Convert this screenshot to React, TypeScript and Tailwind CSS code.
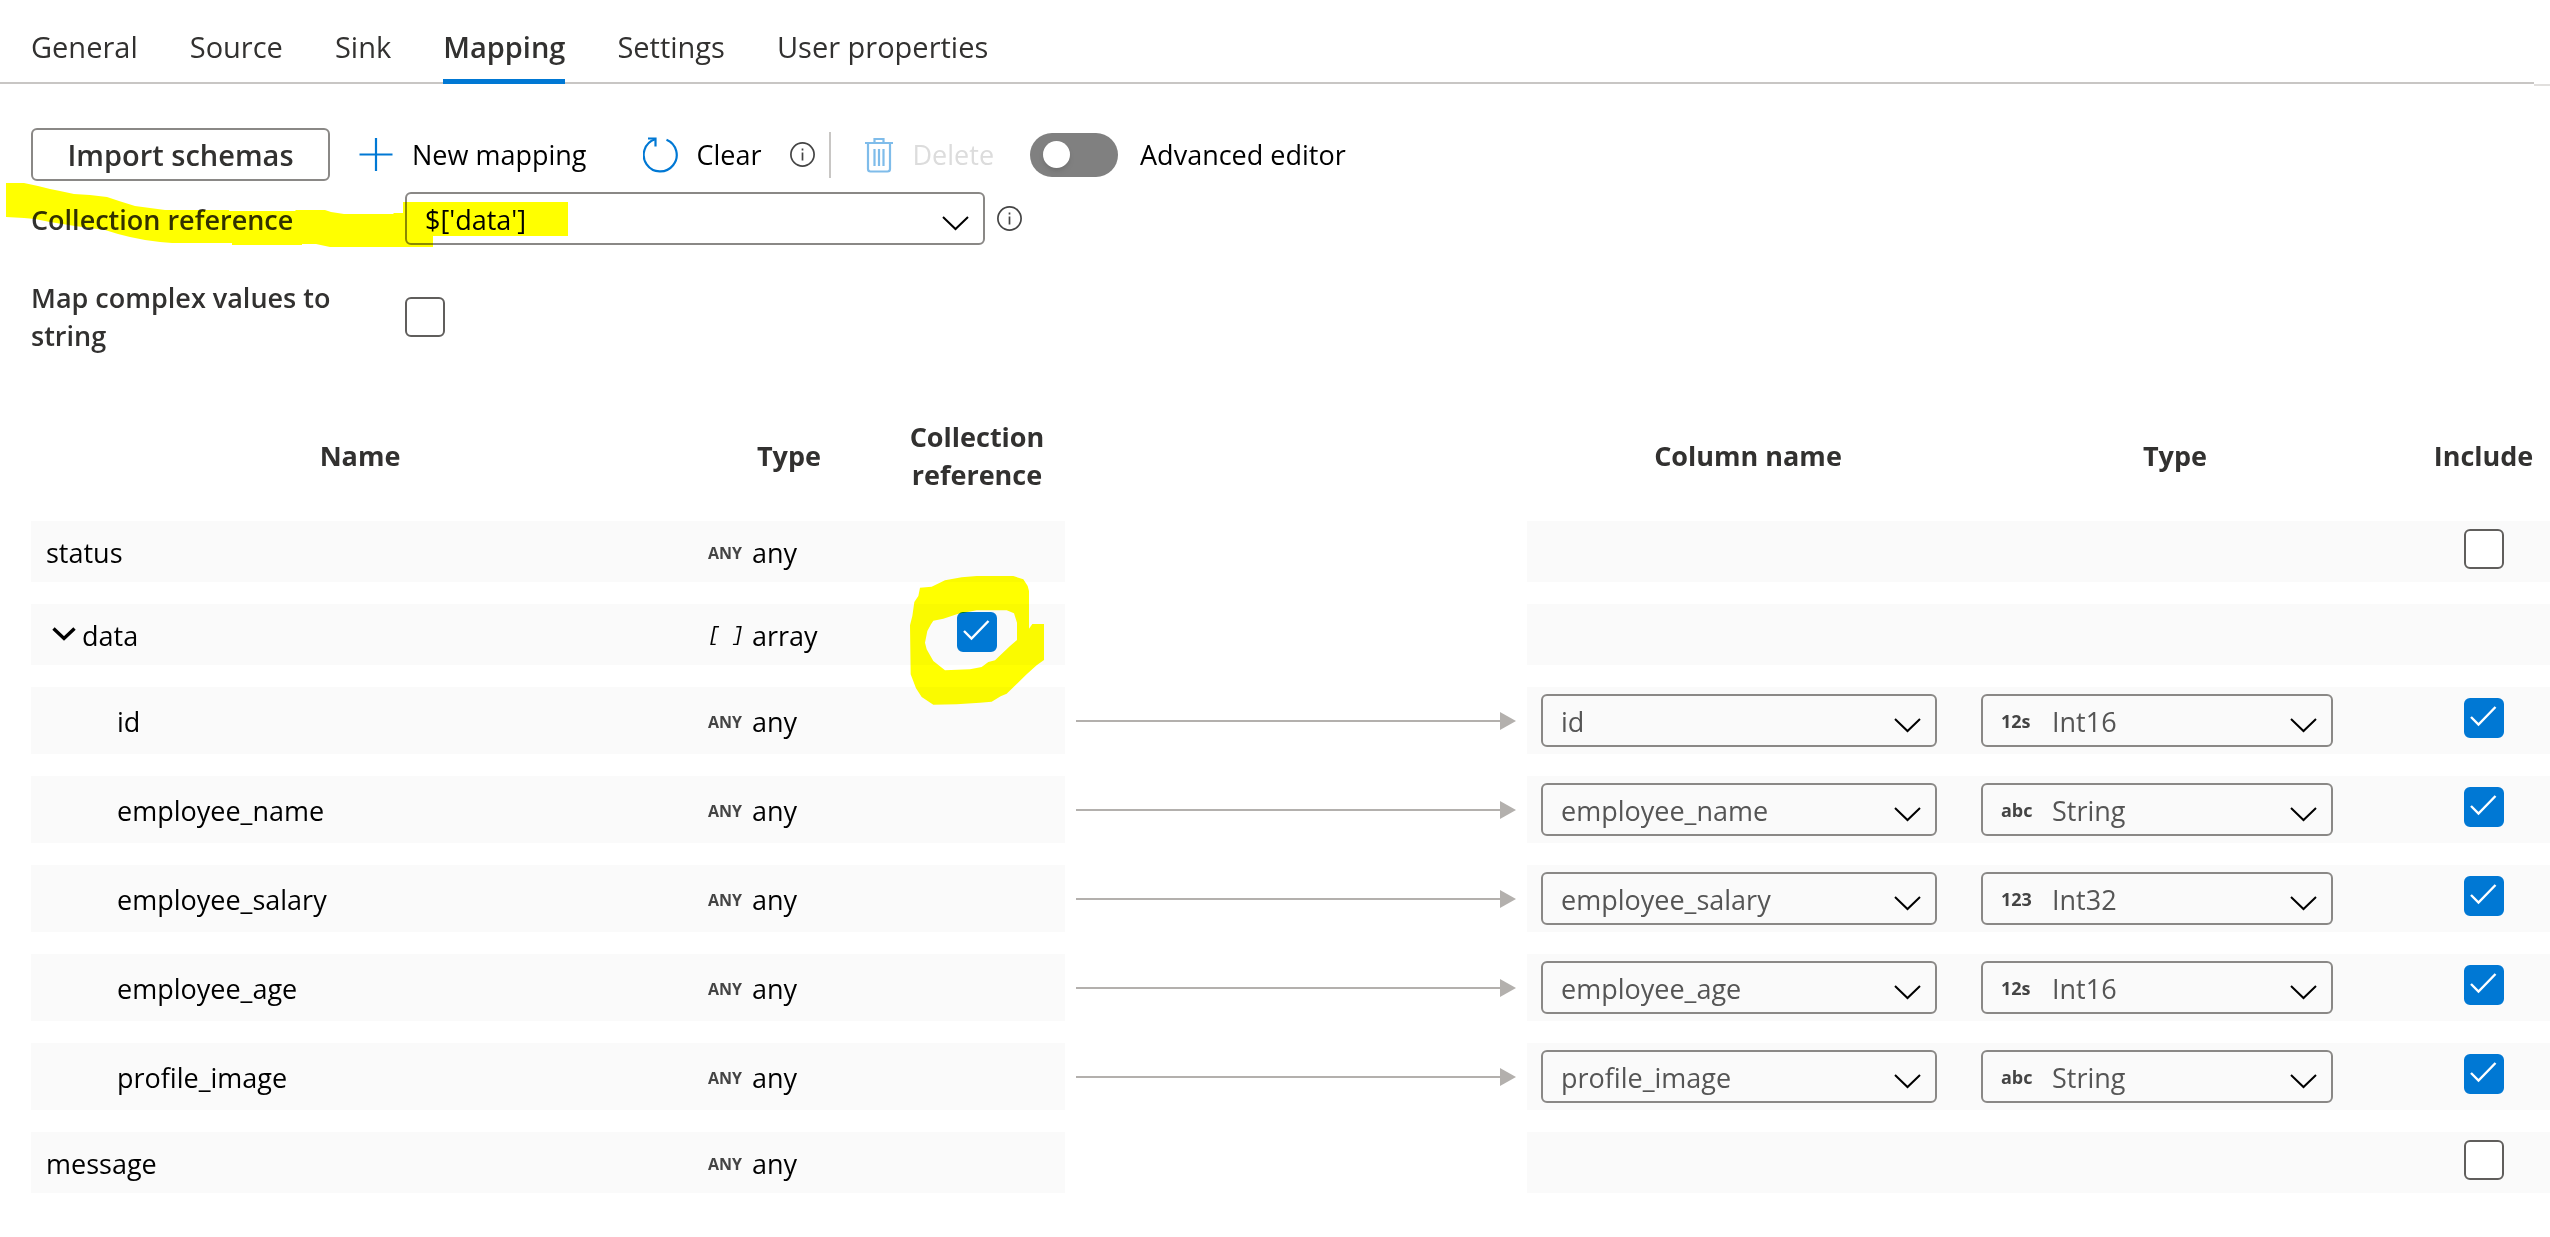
import { useState } from "react";
import type { ReactNode } from "react";

interface MappingRow {
  name: string;
  level: number;
  kind: "leaf" | "array";
  collection?: boolean;
  include?: boolean;
  target?: { badge: string; type: string };
}

const tabs = [
  "General",
  "Source",
  "Sink",
  "Mapping",
  "Settings",
  "User properties",
];

const initialRows: MappingRow[] = [
  { name: "status", level: 0, kind: "leaf", include: false },
  { name: "data", level: 0, kind: "array", collection: true },
  {
    name: "id",
    level: 1,
    kind: "leaf",
    include: true,
    target: { badge: "12s", type: "Int16" },
  },
  {
    name: "employee_name",
    level: 1,
    kind: "leaf",
    include: true,
    target: { badge: "abc", type: "String" },
  },
  {
    name: "employee_salary",
    level: 1,
    kind: "leaf",
    include: true,
    target: { badge: "123", type: "Int32" },
  },
  {
    name: "employee_age",
    level: 1,
    kind: "leaf",
    include: true,
    target: { badge: "12s", type: "Int16" },
  },
  {
    name: "profile_image",
    level: 1,
    kind: "leaf",
    include: true,
    target: { badge: "abc", type: "String" },
  },
  { name: "message", level: 0, kind: "leaf", include: false },
];

const InfoIcon = () => (
  <svg width="25" height="25" viewBox="0 0 25 25" fill="none" stroke="#444">
    <circle cx="12.5" cy="12.5" r="11.6" strokeWidth="1.7" />
    <path d="M12.500 10.500v8M12.500 6.500v2" strokeWidth="1.7" />
  </svg>
);

const PlusIcon = () => (
  <svg width="36" height="36" viewBox="0 0 36 36" stroke="#0078d4">
    <path d="M18 1v33M1.500 17.500h33" strokeWidth="2.2" />
  </svg>
);

const ClearIcon = () => (
  <svg
    width="36"
    height="36"
    viewBox="0 0 36 36"
    fill="none"
    stroke="#0078d4"
    strokeWidth="2.2"
  >
    <path d="M5 1.5h7.500v8" />
    <path d="M12 2.300A16.500 16.500 0 1 0 23.500 2.700" />
  </svg>
);

const TrashIcon = () => (
  <svg
    width="30"
    height="36"
    viewBox="0 0 30 36"
    fill="none"
    stroke="#7fbcea"
    strokeWidth="2.2"
  >
    <path d="M0 6h28M9.500 6V2h9v4M3 6v26q0 2.500 2.500 2.500h17q2.500 0 2.500-2.500V6" />
    <path d="M9.500 12v17M14 12v17M18.500 12v17" />
  </svg>
);

const Select = ({
  label,
  value,
  badge,
  className,
}: {
  label: string;
  value: string;
  badge?: string;
  className: string;
}) => (
  <div className={`relative h-[53px] ${className}`}>
    {badge && (
      <span className="pointer-events-none absolute inset-y-0 left-5 flex items-center text-lg font-bold text-[#444]">
        {badge}
      </span>
    )}
    <select
      aria-label={label}
      defaultValue={value}
      className={`h-full w-full appearance-none rounded-md border-2 border-[#8a8886] bg-transparent pt-[2px] pr-14 ${
        badge ? "pl-[69px] text-[#555]" : "pl-[18px] text-inherit"
      }`}
    >
      <option>{value}</option>
    </select>
    <svg
      className="pointer-events-none absolute top-6 right-4"
      width="27"
      height="15"
      viewBox="0 0 27 15"
      fill="none"
      stroke="#000"
      strokeWidth="2"
    >
      <path d="M1 1l12.500 12L26 1" />
    </svg>
  </div>
);

const Checkbox = ({
  label,
  checked = false,
}: {
  label: string;
  checked?: boolean;
}) => {
  const [on, setOn] = useState(checked);
  return (
    <span className="relative block size-10">
      <input
        type="checkbox"
        aria-label={label}
        checked={on}
        onChange={() => setOn(!on)}
        className="block size-10 appearance-none rounded-md border-2 border-[#605e5c] bg-white checked:border-[#0078d4] checked:bg-[#0078d4]"
      />
      {on && (
        <svg
          className="pointer-events-none absolute inset-0"
          width="40"
          height="40"
          viewBox="0 0 40 40"
          fill="none"
          stroke="#fff"
          strokeWidth="2.4"
        >
          <path d="M7 19l7.500 7.500L31.500 9" />
        </svg>
      )}
    </span>
  );
};

const Arrow = () => (
  <div className="mx-[11px] flex items-center">
    <div className="h-[2px] flex-1 bg-[#b3b0ad]" />
    <svg width="16" height="18" viewBox="0 0 16 18" fill="#b3b0ad">
      <path d="M0 0l16 9L0 18z" />
    </svg>
  </div>
);

const ToolButton = ({
  icon,
  children,
  disabled,
}: {
  icon: ReactNode;
  children: ReactNode;
  disabled?: boolean;
}) => (
  <button
    type="button"
    disabled={disabled}
    className="flex items-center gap-[18px] disabled:text-[#dcdcdc]"
  >
    {icon}
    {children}
  </button>
);

export default function App() {
  const [tab, setTab] = useState("Mapping");
  const [advanced, setAdvanced] = useState(false);

  return (
    <div className="min-h-screen bg-white font-['Open_Sans','Noto_Sans',sans-serif] text-[27px] leading-[38px] text-black">
      <header className="flex">
        <nav className="flex h-[84px] flex-1 gap-[52px] border-b-2 border-[#c8c6c4] pl-[31px] text-[29px] text-[#323130]">
          {tabs.map((name) => (
            <button
              key={name}
              type="button"
              onClick={() => setTab(name)}
              className={`-mb-[2px] border-b-[5px] pt-[14px] ${
                tab === name
                  ? "border-[#0078d4] font-semibold"
                  : "border-transparent"
              }`}
            >
              {name}
            </button>
          ))}
        </nav>
        <div className="h-[86px] w-4 border-b-2 border-[#e1dfdd]" />
      </header>

      <main className="pt-[42px] pl-[31px]">
        <div className="flex h-[53px] items-center">
          <button
            type="button"
            className="h-full w-[299px] rounded-md border-2 border-[#8a8886] text-[29px] font-semibold text-[#323130]"
          >
            Import schemas
          </button>
          <div className="ml-7 flex items-center">
            <ToolButton icon={<PlusIcon />}>New mapping</ToolButton>
          </div>
          <div className="ml-14 flex items-center gap-7">
            <ToolButton icon={<ClearIcon />}>Clear</ToolButton>
            <InfoIcon />
          </div>
          <div className="ml-[14px] h-[46px] w-[2px] bg-[#c8c6c4]" />
          <div className="ml-[34px] flex items-center">
            <ToolButton icon={<TrashIcon />} disabled>
              Delete
            </ToolButton>
          </div>
          <label className="ml-9 flex items-center gap-[22px]">
            <input
              type="checkbox"
              role="switch"
              checked={advanced}
              onChange={() => setAdvanced(!advanced)}
              className="flex h-11 w-22 appearance-none items-center rounded-full bg-[#808080] px-[13px] before:size-[27px] before:rounded-full before:bg-white before:shadow-md checked:justify-end checked:bg-[#0078d4]"
            />
            Advanced editor
          </label>
        </div>

        <div className="relative mt-[11px] flex items-center">
          <span className="w-[374px] pt-[2px] font-semibold text-[#323130]">
            Collection reference
          </span>
          <Select
            label="Collection reference"
            value="$['data']"
            className="w-[580px]"
          />
          <span className="ml-3">
            <InfoIcon />
          </span>
          {/* marker stroke over the label and the selected value */}
          <svg
            className="pointer-events-none absolute -top-[9px] -left-[25px] mix-blend-multiply"
            width="562"
            height="64"
            viewBox="6 183 562 64"
            fill="#ff0"
          >
            <path d="M6 183H24L38 186 50 189 60 191 74 194 90 195 107 197 119 201 135 206 150 208 165 210H229V211H295L296 210H325L331 212 344 214H393L394 213H403V202H568V236H433V247H330L316 244H302V245H232V243H172L160 242 145 240 130 237 118 234 105 230 90 228 75 226 50 222 35 219 24 218 6 217Z" />
          </svg>
        </div>

        <div className="mt-[34px] flex items-center">
          <span className="w-[374px] pr-10 font-semibold text-[#323130]">
            Map complex values to string
          </span>
          <Checkbox label="Map complex values to string" />
        </div>

        <table className="mt-[41px] w-full table-fixed border-separate border-spacing-x-0 border-spacing-y-[22px]">
          <colgroup>
            <col />
            <col className="w-[200px]" />
            <col className="w-[176px]" />
            <col className="w-[462px]" />
            <col className="w-[442px]" />
            <col className="w-[412px]" />
            <col className="w-[169px]" />
          </colgroup>
          <thead className="text-[#323130]">
            <tr>
              <th className="pb-[5px]">Name</th>
              <th className="pb-[5px]">Type</th>
              <th className="pb-[5px]">Collection reference</th>
              <td />
              <th className="pb-[5px]">Column name</th>
              <th className="pb-[5px]">Type</th>
              <th className="pb-[5px] pl-9">Include</th>
            </tr>
          </thead>
          <tbody>
            {initialRows.map((row) => (
              <tr
                key={row.name}
                className={row.target ? "h-[67px]" : "h-[61px]"}
              >
                <td
                  className={`bg-[#fafafa] pt-[2px] ${row.level ? "pl-[86px]" : "pl-[15px]"}`}
                >
                  {row.kind === "array" ? (
                    <button
                      type="button"
                      className="flex items-center gap-[6px] pl-[6px]"
                    >
                      <svg
                        width="24"
                        height="18"
                        viewBox="0 0 24 18"
                        fill="none"
                        stroke="#000"
                        strokeWidth="3.4"
                      >
                        <path d="M1.500 1.500l10.500 10L22.500 1.500" />
                      </svg>
                      {row.name}
                    </button>
                  ) : (
                    row.name
                  )}
                </td>
                <td className="bg-[#fafafa] pt-[2px] pl-[19px]">
                  <div className="flex items-center">
                    {row.kind === "array" ? (
                      <span className="w-11 font-['Liberation_Mono',monospace] text-xl whitespace-nowrap italic">
                        [ ]
                      </span>
                    ) : (
                      <span className="w-11 text-base font-bold text-[#444]">
                        ANY
                      </span>
                    )}
                    {row.kind === "array" ? "array" : "any"}
                  </div>
                </td>
                <td className="bg-[#fafafa] pb-[6px]">
                  {row.collection && (
                    <div className="relative mx-auto w-10">
                      <Checkbox label={`Collection ${row.name}`} checked />
                      <svg
                        className="pointer-events-none absolute -top-9 -left-[47px] max-w-none mix-blend-multiply"
                        width="134"
                        height="129"
                        viewBox="750 525 402 387"
                        fill="#ff0"
                        fillRule="evenodd"
                      >
                        <path d="M780 560L815 557 855 538 905 529 950 525H1060L1090 535 1103 555 1107 570V683L1117 669H1152V777L1130 793 1100 820 1040 878 1022 886 995 902 960 905 890 910 820 911 785 888 768 862 752 820 750 673 757 645 763 603 775 585ZM820 659L850 653 895 638 950 628H1040L1062 637 1071 665V717L1050 735 1005 778 985 783 965 798 930 805 855 808 820 780 800 745 795 725 802 690 813 670Z" />
                      </svg>
                    </div>
                  )}
                </td>
                <td>{row.target && <Arrow />}</td>
                <td className="bg-[#fafafa] px-[14px] text-[#555]">
                  {row.target && (
                    <Select
                      label={`${row.name} column`}
                      value={row.name}
                      className="w-[396px]"
                    />
                  )}
                </td>
                <td className="bg-[#fafafa] px-3">
                  {row.target && (
                    <Select
                      label={`${row.name} type`}
                      value={row.target.type}
                      badge={row.target.badge}
                      className="w-[352px]"
                    />
                  )}
                </td>
                <td className="bg-[#fafafa] pb-[6px] pl-9">
                  {row.include !== undefined && (
                    <div className="mx-auto w-10">
                      <Checkbox
                        label={`Include ${row.name}`}
                        checked={row.include}
                      />
                    </div>
                  )}
                </td>
              </tr>
            ))}
          </tbody>
        </table>
      </main>
    </div>
  );
}
